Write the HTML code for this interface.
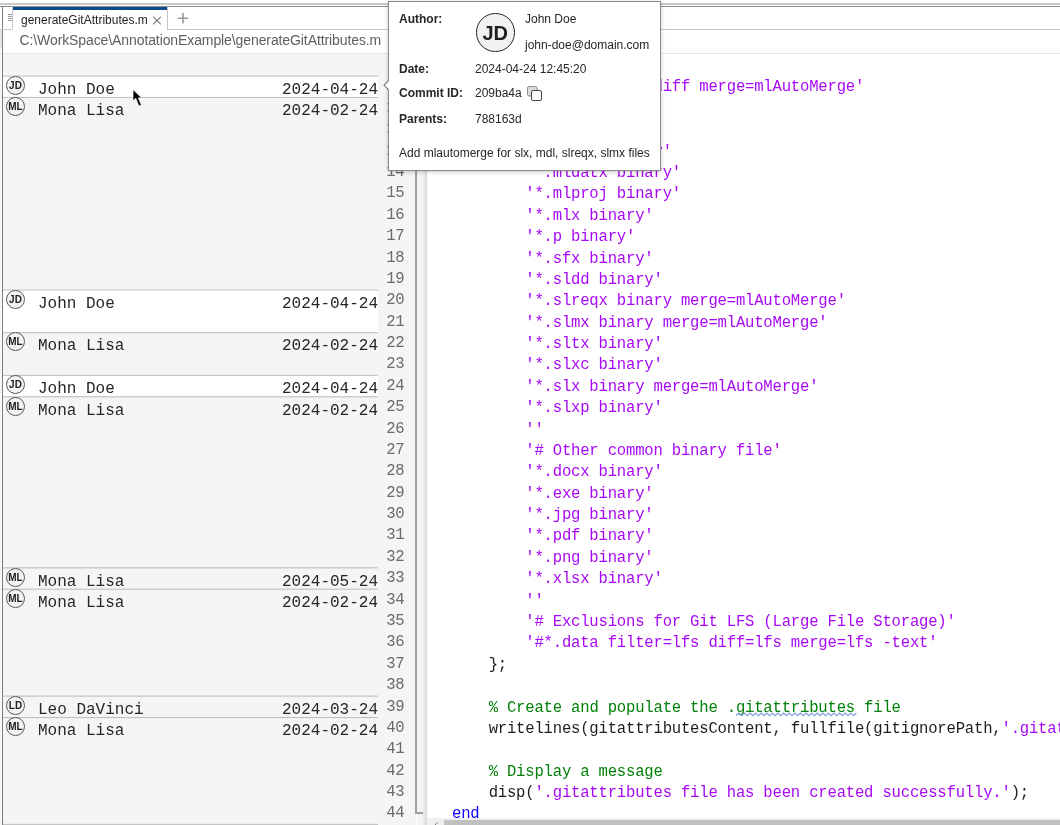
<!DOCTYPE html>
<html><head><meta charset="utf-8"><style>
*{margin:0;padding:0;box-sizing:border-box}
html,body{width:1060px;height:825px;overflow:hidden;background:#fff;position:relative}
body{font-family:"Liberation Sans",sans-serif}
.a{position:absolute}
.mono{font-family:"Liberation Mono",monospace;white-space:pre}
.cl{position:absolute;left:452px;height:21.38px;line-height:21.38px;font-size:15.6px;letter-spacing:-0.2px;color:#1e1e1e}
.s{color:#a709f5}.c{color:#028009}.k{color:#0e00ff}
.ln{position:absolute;left:378px;width:26.5px;text-align:right;height:21.38px;line-height:21.38px;font-size:15.6px;letter-spacing:-0.2px;color:#6b6b6b}
.row{position:absolute;left:3px;width:375px;border-top:1px solid #c6c6c6;background:#f5f5f5}
.row.hl{background:#fff}
.av{position:absolute;left:6px;width:19px;height:19px;border:1px solid #595959;border-radius:50%;background:#f3f3f3;
  font:bold 10px/17.2px "Liberation Sans",sans-serif;text-align:center;color:#1e1e1e;letter-spacing:0px}
.an{position:absolute;left:38px;font-size:16px;color:#262626;line-height:20px}
.ad{position:absolute;left:282px;font-size:16px;color:#262626;line-height:20px}
.pl{position:absolute;font-size:12px;color:#262626;white-space:nowrap}
.pb{font-weight:bold}
</style></head><body><div style="position:absolute;left:0;top:0;width:1060px;height:825px;overflow:hidden;will-change:transform">


<div class="a" style="left:0;top:3px;width:1060px;height:2px;background:#c9c9c9"></div>
<div class="a" style="left:0;top:6px;width:1060px;height:1px;background:#8c8c8c"></div>
<div class="a" style="left:2px;top:6px;width:1px;height:819px;background:#7d7d7d"></div>
<div class="a" style="left:0;top:29px;width:2px;height:19px;background:#e6e6e6"></div>
<div class="a" style="left:0;top:48px;width:2px;height:777px;background:#f7f7f7"></div>
<div class="a" style="left:0;top:29px;width:3px;height:1px;background:#cfcfcf"></div>
<!-- tab handle -->
<div class="a" style="left:3px;top:7px;width:10px;height:23px;border-right:1px solid #c8c8c8;border-bottom:1px solid #c8c8c8;border-bottom-right-radius:2px;background:#fff"></div>
<div class="a" style="left:8px;top:14px;width:4px;height:1px;background:#9a9a9a"></div>
<div class="a" style="left:8px;top:16px;width:4px;height:1px;background:#9a9a9a"></div>
<div class="a" style="left:8px;top:18px;width:4px;height:1px;background:#9a9a9a"></div>
<div class="a" style="left:8px;top:20px;width:4px;height:1px;background:#9a9a9a"></div>
<!-- tab -->
<div class="a" style="left:13px;top:7px;width:155px;height:23px;background:#fff;border-right:1px solid #c6c6c6"></div>
<div class="a" style="left:13px;top:7px;width:154px;height:3px;background:#0b4b8c"></div>
<div class="pl" style="left:21px;top:13px;font-size:12px;color:#1f1f1f">generateGitAttributes.m</div>
<svg class="a" style="left:152px;top:15px" width="10" height="10" viewBox="0 0 10 10"><path d="M1.2 1.8L8.8 9.2M8.8 1.8L1.2 9.2" stroke="#3a3a3a" stroke-width="1"/></svg>
<svg class="a" style="left:177px;top:13px" width="12" height="11" viewBox="0 0 12 11"><path d="M6 0V10.5M0.8 5.2H11.2" stroke="#9c9c9c" stroke-width="1.6"/></svg>
<div class="a" style="left:168px;top:29px;width:892px;height:1px;background:#c6c6c6"></div>
<!-- path bar -->
<div class="pl" style="left:19.5px;top:32px;font-size:14px;letter-spacing:-0.1px;color:#5e5e5e">C:\WorkSpace\AnnotationExample\generateGitAttributes.m</div>
<div class="a" style="left:3px;top:53px;width:1057px;height:1px;background:#e8e8e8"></div>
<!-- annotation pane -->
<div class="a" style="left:3px;top:54px;width:375px;height:771px;background:#f5f5f5"></div>
<div class="a" style="left:378px;top:54px;width:38px;height:771px;background:#f5f5f5"></div>
<div class="a" style="left:415px;top:54px;width:2px;height:759px;background:#a0a0a0"></div>
<div class="a" style="left:417px;top:54px;width:10px;height:771px;background:#f3f3f3"></div>
<div class="a" style="left:422px;top:54px;width:5px;height:771px;background:linear-gradient(90deg,#f4f4f4,#d8d8d8)"></div>

<div class="a" style="left:3px;top:76px;width:375px;height:21px;background:#fff"></div>
<div class="a" style="left:3px;top:289px;width:375px;height:43px;background:#fff"></div>
<div class="a" style="left:3px;top:375px;width:375px;height:21px;background:#fff"></div>
<div class="a" style="left:3px;top:75px;width:375px;height:1px;background:#a8a8a8;opacity:0.31"></div>
<div class="a" style="left:3px;top:76px;width:375px;height:1px;background:#a8a8a8;opacity:0.44"></div>
<div class="av" style="top:75.80px">JD</div>
<div class="an mono" style="top:80px">John Doe</div>
<div class="ad mono" style="top:80px">2024-04-24</div>
<div class="a" style="left:3px;top:96px;width:375px;height:1px;background:#a8a8a8;opacity:0.06"></div>
<div class="a" style="left:3px;top:97px;width:375px;height:1px;background:#a8a8a8;opacity:0.69"></div>
<div class="av" style="top:97.18px">ML</div>
<div class="an mono" style="top:101px">Mona Lisa</div>
<div class="ad mono" style="top:101px">2024-02-24</div>
<div class="a" style="left:3px;top:289px;width:375px;height:1px;background:#a8a8a8;opacity:0.44"></div>
<div class="a" style="left:3px;top:290px;width:375px;height:1px;background:#a8a8a8;opacity:0.31"></div>
<div class="av" style="top:289.60px">JD</div>
<div class="an mono" style="top:294px">John Doe</div>
<div class="ad mono" style="top:294px">2024-04-24</div>
<div class="a" style="left:3px;top:332px;width:375px;height:1px;background:#a8a8a8;opacity:0.60"></div>
<div class="a" style="left:3px;top:333px;width:375px;height:1px;background:#a8a8a8;opacity:0.15"></div>
<div class="av" style="top:332.36px">ML</div>
<div class="an mono" style="top:336px">Mona Lisa</div>
<div class="ad mono" style="top:336px">2024-02-24</div>
<div class="a" style="left:3px;top:374px;width:375px;height:1px;background:#a8a8a8;opacity:0.10"></div>
<div class="a" style="left:3px;top:375px;width:375px;height:1px;background:#a8a8a8;opacity:0.65"></div>
<div class="av" style="top:375.12px">JD</div>
<div class="an mono" style="top:379px">John Doe</div>
<div class="ad mono" style="top:379px">2024-04-24</div>
<div class="a" style="left:3px;top:396px;width:375px;height:1px;background:#a8a8a8;opacity:0.51"></div>
<div class="a" style="left:3px;top:397px;width:375px;height:1px;background:#a8a8a8;opacity:0.24"></div>
<div class="av" style="top:396.50px">ML</div>
<div class="an mono" style="top:401px">Mona Lisa</div>
<div class="ad mono" style="top:401px">2024-02-24</div>
<div class="a" style="left:3px;top:567px;width:375px;height:1px;background:#a8a8a8;opacity:0.48"></div>
<div class="a" style="left:3px;top:568px;width:375px;height:1px;background:#a8a8a8;opacity:0.27"></div>
<div class="av" style="top:567.54px">ML</div>
<div class="an mono" style="top:572px">Mona Lisa</div>
<div class="ad mono" style="top:572px">2024-05-24</div>
<div class="a" style="left:3px;top:588px;width:375px;height:1px;background:#a8a8a8;opacity:0.23"></div>
<div class="a" style="left:3px;top:589px;width:375px;height:1px;background:#a8a8a8;opacity:0.52"></div>
<div class="av" style="top:588.92px">ML</div>
<div class="an mono" style="top:593px">Mona Lisa</div>
<div class="ad mono" style="top:593px">2024-02-24</div>
<div class="a" style="left:3px;top:695px;width:375px;height:1px;background:#a8a8a8;opacity:0.30"></div>
<div class="a" style="left:3px;top:696px;width:375px;height:1px;background:#a8a8a8;opacity:0.45"></div>
<div class="av" style="top:695.82px">LD</div>
<div class="an mono" style="top:700px">Leo DaVinci</div>
<div class="ad mono" style="top:700px">2024-03-24</div>
<div class="a" style="left:3px;top:717px;width:375px;height:1px;background:#a8a8a8;opacity:0.70"></div>
<div class="a" style="left:3px;top:718px;width:375px;height:1px;background:#a8a8a8;opacity:0.05"></div>
<div class="av" style="top:717.20px">ML</div>
<div class="an mono" style="top:721px">Mona Lisa</div>
<div class="ad mono" style="top:721px">2024-02-24</div>
<div class="a" style="left:3px;top:823px;width:375px;height:1px;background:#a8a8a8;opacity:0.12"></div>
<div class="a" style="left:3px;top:824px;width:375px;height:1px;background:#a8a8a8;opacity:0.63"></div>
<div class="ln mono" style="top:76px">10</div>
<div class="cl mono" style="top:77px">        <span class="s">&#x27;*.mdl binary diff merge=mlAutoMerge&#x27;</span></div>
<div class="ln mono" style="top:98px">11</div>
<div class="cl mono" style="top:99px">        <span class="s">&#x27;*.mdlp binary&#x27;</span></div>
<div class="ln mono" style="top:119px">12</div>
<div class="cl mono" style="top:120px">        <span class="s">&#x27;*.mat binary&#x27;</span></div>
<div class="ln mono" style="top:141px">13</div>
<div class="cl mono" style="top:142px">        <span class="s">&#x27;*.mlapp binary&#x27;</span></div>
<div class="ln mono" style="top:162px">14</div>
<div class="cl mono" style="top:163px">        <span class="s">&#x27;*.mldatx binary&#x27;</span></div>
<div class="ln mono" style="top:183px">15</div>
<div class="cl mono" style="top:184px">        <span class="s">&#x27;*.mlproj binary&#x27;</span></div>
<div class="ln mono" style="top:205px">16</div>
<div class="cl mono" style="top:206px">        <span class="s">&#x27;*.mlx binary&#x27;</span></div>
<div class="ln mono" style="top:226px">17</div>
<div class="cl mono" style="top:227px">        <span class="s">&#x27;*.p binary&#x27;</span></div>
<div class="ln mono" style="top:248px">18</div>
<div class="cl mono" style="top:249px">        <span class="s">&#x27;*.sfx binary&#x27;</span></div>
<div class="ln mono" style="top:269px">19</div>
<div class="cl mono" style="top:270px">        <span class="s">&#x27;*.sldd binary&#x27;</span></div>
<div class="ln mono" style="top:290px">20</div>
<div class="cl mono" style="top:291px">        <span class="s">&#x27;*.slreqx binary merge=mlAutoMerge&#x27;</span></div>
<div class="ln mono" style="top:312px">21</div>
<div class="cl mono" style="top:313px">        <span class="s">&#x27;*.slmx binary merge=mlAutoMerge&#x27;</span></div>
<div class="ln mono" style="top:333px">22</div>
<div class="cl mono" style="top:334px">        <span class="s">&#x27;*.sltx binary&#x27;</span></div>
<div class="ln mono" style="top:354px">23</div>
<div class="cl mono" style="top:355px">        <span class="s">&#x27;*.slxc binary&#x27;</span></div>
<div class="ln mono" style="top:376px">24</div>
<div class="cl mono" style="top:377px">        <span class="s">&#x27;*.slx binary merge=mlAutoMerge&#x27;</span></div>
<div class="ln mono" style="top:397px">25</div>
<div class="cl mono" style="top:398px">        <span class="s">&#x27;*.slxp binary&#x27;</span></div>
<div class="ln mono" style="top:419px">26</div>
<div class="cl mono" style="top:420px">        <span class="s">&#x27;&#x27;</span></div>
<div class="ln mono" style="top:440px">27</div>
<div class="cl mono" style="top:441px">        <span class="s">&#x27;# Other common binary file&#x27;</span></div>
<div class="ln mono" style="top:461px">28</div>
<div class="cl mono" style="top:462px">        <span class="s">&#x27;*.docx binary&#x27;</span></div>
<div class="ln mono" style="top:483px">29</div>
<div class="cl mono" style="top:484px">        <span class="s">&#x27;*.exe binary&#x27;</span></div>
<div class="ln mono" style="top:504px">30</div>
<div class="cl mono" style="top:505px">        <span class="s">&#x27;*.jpg binary&#x27;</span></div>
<div class="ln mono" style="top:525px">31</div>
<div class="cl mono" style="top:526px">        <span class="s">&#x27;*.pdf binary&#x27;</span></div>
<div class="ln mono" style="top:547px">32</div>
<div class="cl mono" style="top:548px">        <span class="s">&#x27;*.png binary&#x27;</span></div>
<div class="ln mono" style="top:568px">33</div>
<div class="cl mono" style="top:569px">        <span class="s">&#x27;*.xlsx binary&#x27;</span></div>
<div class="ln mono" style="top:590px">34</div>
<div class="cl mono" style="top:591px">        <span class="s">&#x27;&#x27;</span></div>
<div class="ln mono" style="top:611px">35</div>
<div class="cl mono" style="top:612px">        <span class="s">&#x27;# Exclusions for Git LFS (Large File Storage)&#x27;</span></div>
<div class="ln mono" style="top:632px">36</div>
<div class="cl mono" style="top:633px">        <span class="s">&#x27;#*.data filter=lfs diff=lfs merge=lfs -text&#x27;</span></div>
<div class="ln mono" style="top:654px">37</div>
<div class="cl mono" style="top:655px">    };</div>
<div class="ln mono" style="top:675px">38</div>
<div class="cl mono" style="top:676px"></div>
<div class="ln mono" style="top:697px">39</div>
<div class="cl mono" style="top:698px">    <span class="c">% Create and populate the .gitattributes file</span></div>
<div class="ln mono" style="top:718px">40</div>
<div class="cl mono" style="top:719px">    writelines(gitattributesContent, fullfile(gitignorePath,<span class="s">&#x27;.gitattributes&#x27;</span>));</div>
<div class="ln mono" style="top:739px">41</div>
<div class="cl mono" style="top:740px"></div>
<div class="ln mono" style="top:761px">42</div>
<div class="cl mono" style="top:762px">    <span class="c">% Display a message</span></div>
<div class="ln mono" style="top:782px">43</div>
<div class="cl mono" style="top:783px">    disp(<span class="s">&#x27;.gitattributes file has been created successfully.&#x27;</span>);</div>
<div class="ln mono" style="top:803px">44</div>
<div class="cl mono" style="top:804px"><span class="k">end</span></div>
<svg class="a" style="left:736px;top:712px" width="122" height="5" viewBox="0 0 122 5"><polyline points="0.00 3.6 2.80 1.0 5.60 3.6 8.40 1.0 11.20 3.6 14.00 1.0 16.80 3.6 19.60 1.0 22.40 3.6 25.20 1.0 28.00 3.6 30.80 1.0 33.60 3.6 36.40 1.0 39.20 3.6 42.00 1.0 44.80 3.6 47.60 1.0 50.40 3.6 53.20 1.0 56.00 3.6 58.80 1.0 61.60 3.6 64.40 1.0 67.20 3.6 70.00 1.0 72.80 3.6 75.60 1.0 78.40 3.6 81.20 1.0 84.00 3.6 86.80 1.0 89.60 3.6 92.40 1.0 95.20 3.6 98.00 1.0 100.80 3.6 103.60 1.0 106.40 3.6 109.20 1.0 112.00 3.6 114.80 1.0 117.60 3.6 120.40 1.0" fill="none" stroke="#7d9fd8" stroke-width="1.2"/></svg>
<div class="a" style="left:415px;top:812px;width:8px;height:2px;background:#a0a0a0"></div>
<div class="a" style="left:427px;top:818px;width:633px;height:7px;background:#efefef"></div>
<div class="a" style="left:444px;top:820px;width:616px;height:5px;background:#c1c1c1"></div>
<svg class="a" style="left:432px;top:820px" width="8" height="6" viewBox="0 0 8 6"><path d="M5.5 2.5L2.5 5.5" stroke="#777" stroke-width="1"/></svg>

<div class="a" style="left:388px;top:1px;width:273px;height:170px;background:#fff;border:1px solid #8a8a8a;box-shadow:0 1px 4px rgba(0,0,0,0.22)"></div>
<svg class="a" style="left:383px;top:79px" width="8" height="13" viewBox="0 0 8 13"><path d="M6 1.5L1 6.3L6 11" fill="#fff" stroke="none"/><rect x="5" y="1.9" width="2.5" height="8.8" fill="#fff"/><path d="M5.7 1.3L1 6.3L5.7 10.9" fill="none" stroke="#7a7a7a" stroke-width="1.1"/></svg>
<div class="pl pb" style="left:399px;top:12px">Author:</div>
<div class="a" style="left:476px;top:13px;width:38.5px;height:38.5px;border:1.6px solid #262626;border-radius:50%;background:#f2f2f2;font:bold 20px/38px 'Liberation Sans',sans-serif;text-align:center;color:#1f1f1f">JD</div>
<div class="pl" style="left:525px;top:12px">John Doe</div>
<div class="pl" style="left:525px;top:38px">john-doe@domain.com</div>
<div class="pl pb" style="left:399px;top:62px">Date:</div>
<div class="pl" style="left:475px;top:62px">2024-04-24 12:45:20</div>
<div class="pl pb" style="left:399px;top:86px">Commit ID:</div>
<div class="pl" style="left:475px;top:86px">209ba4a</div>
<svg class="a" style="left:527px;top:86px" width="16" height="16" viewBox="0 0 16 16"><rect x="0.5" y="0.5" width="9.5" height="9.5" rx="1.5" fill="#dcdcdc" stroke="#8c8c8c" stroke-width="1"/><rect x="4.5" y="4.5" width="10" height="10" rx="1.5" fill="#fff" stroke="#454545" stroke-width="1"/></svg>
<div class="pl pb" style="left:399px;top:112px">Parents:</div>
<div class="pl" style="left:475px;top:112px">788163d</div>
<div class="pl" style="left:399px;top:146px">Add mlautomerge for slx, mdl, slreqx, slmx files</div>

<svg class="a" style="left:131px;top:88px" width="14" height="21" viewBox="0 0 14 21"><path d="M2 1.6V12.8L4.8 10.3L7.9 18.1L10.4 17.1L7.4 9.9H10.7Z" fill="#000" stroke="#fff" stroke-width="0.7" stroke-linejoin="miter"/></svg>
</div></body></html>
